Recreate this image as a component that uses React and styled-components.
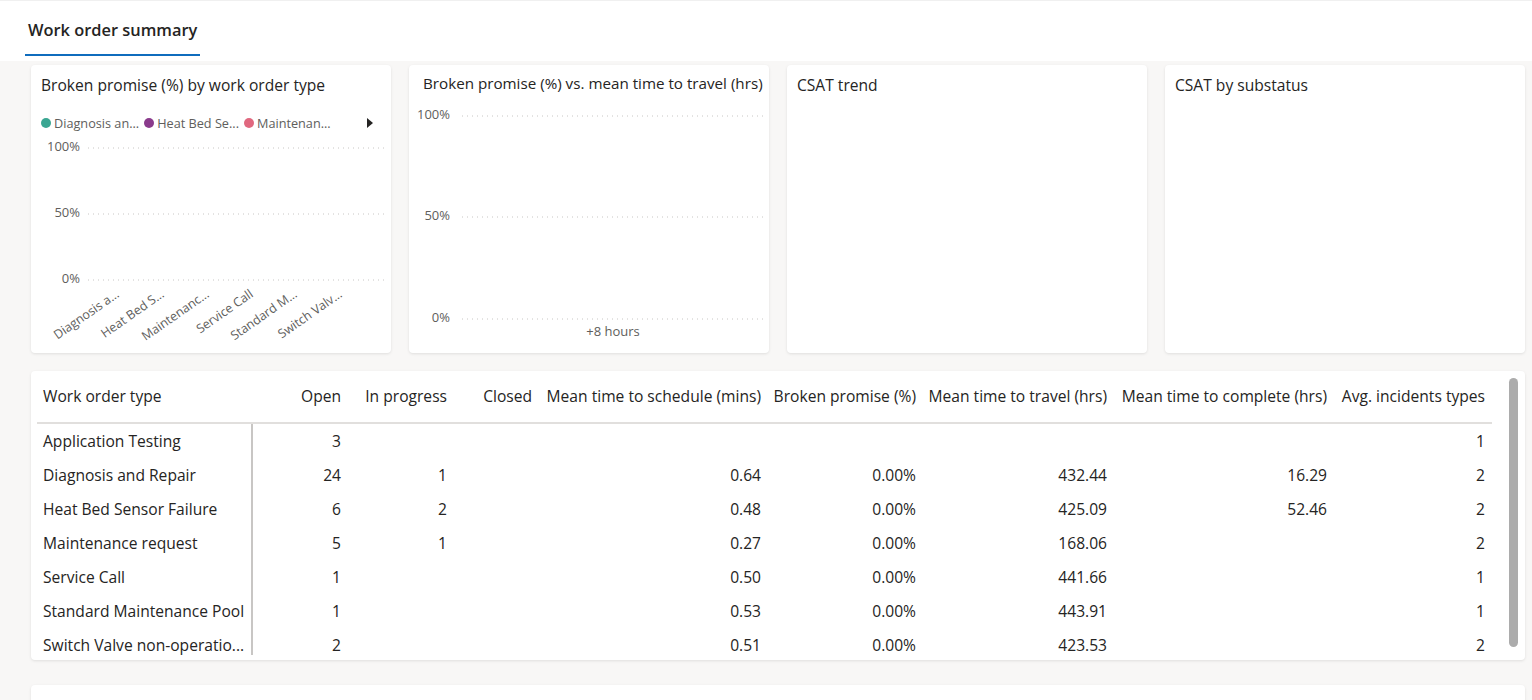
import styled, { createGlobalStyle } from "styled-components";

const GlobalStyle = createGlobalStyle`
  body {
    margin: 0;
    background: #f8f7f6;
    font-family: "Open Sans", "Noto Sans", sans-serif;
    color: #252423;
  }
`;

const legendItems = [
  { label: "Diagnosis an...", color: "#3aa692" },
  { label: "Heat Bed Se...", color: "#8a3b8c" },
  { label: "Maintenan...", color: "#e0687f" },
];

const categories = [
  { label: "Diagnosis a...", x: 89 },
  { label: "Heat Bed S...", x: 134 },
  { label: "Maintenanc...", x: 179 },
  { label: "Service Call", x: 223 },
  { label: "Standard M...", x: 267 },
  { label: "Switch Valv...", x: 312 },
];

const columns = [
  "Work order type",
  "Open",
  "In progress",
  "Closed",
  "Mean time to schedule (mins)",
  "Broken promise (%)",
  "Mean time to travel (hrs)",
  "Mean time to complete (hrs)",
  "Avg. incidents types",
];

const rows = [
  ["Application Testing", "3", "", "", "", "", "", "", "1"],
  ["Diagnosis and Repair", "24", "1", "", "0.64", "0.00%", "432.44", "16.29", "2"],
  ["Heat Bed Sensor Failure", "6", "2", "", "0.48", "0.00%", "425.09", "52.46", "2"],
  ["Maintenance request", "5", "1", "", "0.27", "0.00%", "168.06", "", "2"],
  ["Service Call", "1", "", "", "0.50", "0.00%", "441.66", "", "1"],
  ["Standard Maintenance Pool", "1", "", "", "0.53", "0.00%", "443.91", "", "1"],
  ["Switch Valve non-operatio...", "2", "", "", "0.51", "0.00%", "423.53", "", "2"],
];

// dotted chart gridline
const Gridline = ({ y, x1, x2 }) => (
  <line x1={x1} x2={x2} y1={y} y2={y} stroke="#c8c6c4" strokeWidth="1" strokeDasharray="1 4" />
);

const AxisLabel = ({ x, y, children }) => (
  <text x={x} y={y} textAnchor="end" fontSize="13" fill="#605e5c" dominantBaseline="middle">
    {children}
  </text>
);

const App = () => {
  return (
    <Page>
      <GlobalStyle />
      <Header>
        <Tab>Work order summary</Tab>
      </Header>
      <Content>
        <ChartRow>
          <Card>
            <Title $top={9}>Broken promise (%) by work order type</Title>
            <Legend>
              {legendItems.map((item) => (
                <LegendItem key={item.label}>
                  <Dot $color={item.color} />
                  {item.label}
                </LegendItem>
              ))}
              <Arrow />
            </Legend>
            <svg width="360" height="219">
              <Gridline y={14} x1={57} x2={354} />
              <Gridline y={80} x1={57} x2={354} />
              <Gridline y={146} x1={57} x2={354} />
              <AxisLabel x={49} y={14}>100%</AxisLabel>
              <AxisLabel x={49} y={80}>50%</AxisLabel>
              <AxisLabel x={49} y={146}>0%</AxisLabel>
              {categories.map((c) => (
                <text
                  key={c.label}
                  x={c.x}
                  y={162}
                  textAnchor="end"
                  fontSize="12.5"
                  fill="#605e5c"
                  transform={`rotate(-35 ${c.x} 162)`}
                >
                  {c.label}
                </text>
              ))}
            </svg>
          </Card>
          <Card>
            <Title $top={7} $left={14} $size={15.2}>
              Broken promise (%) vs. mean time to travel (hrs)
            </Title>
            <svg width="360" height="259">
              <Gridline y={22} x1={53} x2={354} />
              <Gridline y={123} x1={53} x2={354} />
              <Gridline y={225} x1={53} x2={354} />
              <AxisLabel x={41} y={22}>100%</AxisLabel>
              <AxisLabel x={41} y={123}>50%</AxisLabel>
              <AxisLabel x={41} y={225}>0%</AxisLabel>
              <text x={204} y={239} textAnchor="middle" fontSize="13" fill="#605e5c" dominantBaseline="middle">
                +8 hours
              </text>
            </svg>
          </Card>
          <Card>
            <Title $top={9}>CSAT trend</Title>
          </Card>
          <Card>
            <Title $top={9}>CSAT by substatus</Title>
          </Card>
        </ChartRow>

        <TableCard>
          <Table>
            <HeadRow>
              {columns.map((col, i) => (
                <HeadCell key={col} $first={i === 0}>
                  {col}
                </HeadCell>
              ))}
            </HeadRow>
            <Body>
              {rows.map((row) => (
                <Row key={row[0]}>
                  {row.map((cell, i) => (
                    <Cell key={i} $first={i === 0}>
                      {cell}
                    </Cell>
                  ))}
                </Row>
              ))}
            </Body>
          </Table>
          <Track>
            <Thumb />
          </Track>
        </TableCard>

        <BottomCard />
      </Content>
    </Page>
  );
};

export default App;

const Page = styled.div`
  height: 100vh;
  overflow: hidden;
`;

const Header = styled.div`
  height: 60px;
  background: #fff;
  border-top: 1px solid #f0f0f0;
  padding-left: 25px;
  display: flex;
  align-items: flex-end;
`;

const Tab = styled.div`
  font-size: 16.4px;
  font-weight: 600;
  line-height: 24px;
  padding: 0 3px 12px;
  width: 175px;
  box-sizing: border-box;
  border-bottom: 2px solid #0f6cbd;
  margin-bottom: 5px;
  white-space: nowrap;
`;

const Content = styled.div`
  padding: 4px 7px 0 31px;
`;

const ChartRow = styled.div`
  display: grid;
  grid-template-columns: repeat(4, 360px);
  gap: 18px;
  margin-bottom: 18px;
`;

const Card = styled.div`
  background: #fff;
  border-radius: 4px;
  height: 288px;
  box-shadow: 0 1px 3px rgba(0, 0, 0, 0.1);
  overflow: hidden;
  display: flex;
  flex-direction: column;
`;

const Title = styled.div`
  font-size: ${(p) => p.$size || 15.6}px;
  line-height: 22px;
  padding: ${(p) => p.$top}px 0 0 ${(p) => p.$left || 10}px;
  white-space: nowrap;
`;

const Legend = styled.div`
  display: flex;
  align-items: center;
  height: 22px;
  margin-top: 16px;
  padding-left: 10px;
  font-size: 12.7px;
  color: #605e5c;
`;

const LegendItem = styled.div`
  display: flex;
  align-items: center;
  margin-right: 5px;
  white-space: nowrap;
`;

const Dot = styled.span`
  width: 10px;
  height: 10px;
  border-radius: 50%;
  background: ${(p) => p.$color};
  margin-right: 3px;
`;

const Arrow = styled.span`
  margin-left: auto;
  margin-right: 18px;
  width: 0;
  height: 0;
  border-top: 5px solid transparent;
  border-bottom: 5px solid transparent;
  border-left: 6px solid #252423;
`;

const TableCard = styled.div`
  background: #fff;
  border-radius: 4px;
  height: 289px;
  width: 1494px;
  box-shadow: 0 1px 3px rgba(0, 0, 0, 0.1);
  display: flex;
  overflow: hidden;
  margin-bottom: 25px;
`;

const Table = styled.div`
  margin-left: 6px;
  width: 1455px;
  font-size: 15.6px;
`;

const gridCols = "216px 95px 106px 85px 229px 155px 191px 220px 158px";

const HeadRow = styled.div`
  display: grid;
  grid-template-columns: ${gridCols};
  height: 51px;
  border-bottom: 2px solid #e1dfdd;
`;

const HeadCell = styled.div`
  padding: 14px 7px 0 ${(p) => (p.$first ? "6px" : "0")};
  line-height: 22px;
  text-align: ${(p) => (p.$first ? "left" : "right")};
  white-space: nowrap;
`;

const Body = styled.div`
  height: 231px;
  overflow: hidden;
`;

const Row = styled.div`
  display: grid;
  grid-template-columns: ${gridCols};
  height: 34px;
`;

const Cell = styled.div`
  display: flex;
  align-items: center;
  justify-content: ${(p) => (p.$first ? "flex-start" : "flex-end")};
  padding: ${(p) => (p.$first ? "0 2px 0 6px" : "0 7px 0 0")};
  white-space: nowrap;
  border-right: ${(p) => (p.$first ? "2px solid #c8c6c4" : "none")};
`;

const Track = styled.div`
  margin-left: auto;
  margin-right: 7px;
  padding-top: 7px;
`;

const Thumb = styled.div`
  width: 9px;
  height: 269px;
  border-radius: 5px;
  background: #acacac;
`;

const BottomCard = styled.div`
  background: #fff;
  border-radius: 4px;
  width: 1494px;
  height: 60px;
  box-shadow: 0 1px 3px rgba(0, 0, 0, 0.1);
`;
